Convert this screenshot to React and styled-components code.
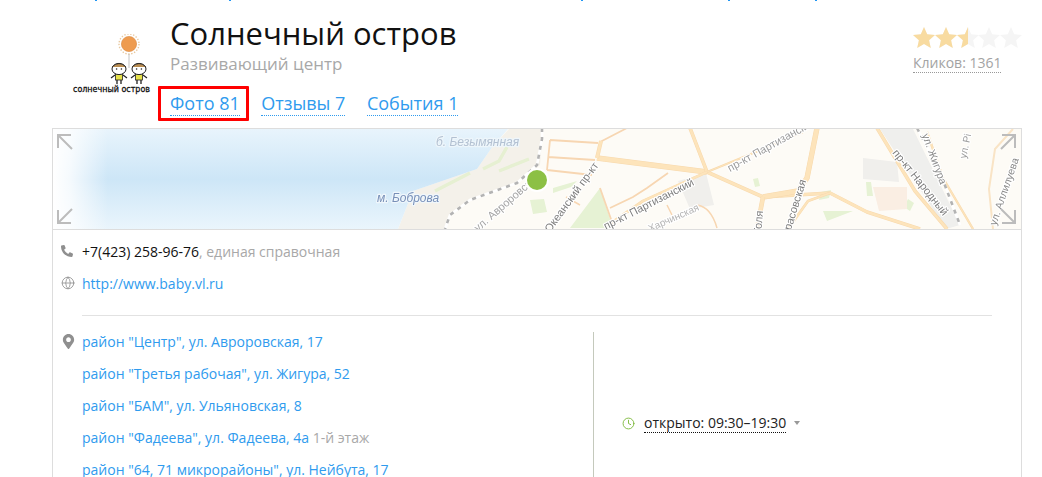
import React from "react";
import styled, { createGlobalStyle } from "styled-components";
import { Globe, Clock } from "lucide-react";
import { FaPhoneAlt, FaMapMarkerAlt } from "react-icons/fa";

const Global = createGlobalStyle`
  html, body { margin: 0; padding: 0; background: #fff; overflow: hidden; height: 477px; }
  body { font-family: "Open Sans", "Noto Sans", sans-serif; font-size: 14px; color: #111; }
`;
const Page = styled.div`width: 1042px; height: 477px; overflow: hidden; position: relative;`;
const Strip = styled.div`display: flex; height: 1px;`;
const Tick = styled.i`display: block; width: 2px; height: 1px; background: #2196f3; margin-left: ${p => p.$gap}px;`;
const Header = styled.header`display: flex; height: 127px; padding-left: 72px; box-sizing: border-box;`;
const Logo = styled.svg`width: 80px; height: 62px; margin-top: 33px; flex: none;`;
const Head = styled.div`margin-left: 18px; flex: 1; display: flex; flex-direction: column;`;
const Title = styled.h1`margin: 11px 0 0; font-size: 31px; line-height: 42px; font-weight: 400; color: #111;`;
const Subtitle = styled.div`font-size: 17px; line-height: 20px; color: #a8a8a8;`;
const Tabs = styled.nav`display: flex; gap: 21.5px; margin-top: 18px;`;
const Tab = styled.a`
  position: relative; font-size: 18px; line-height: 23px; color: #2f9bee;
  border-bottom: 1px dotted #2f9bee; display: block;
  ${p => p.$active && `
    &::after { content: ""; position: absolute; left: -12px; right: -9px; top: -6px; bottom: -6px; border: 3px solid #f00; border-radius: 1px; }
  `}
`;
const Rating = styled.div`width: 109px; margin: 26px 20px 0 0; flex: none;`;
const Clicks = styled.span`display: inline-block; margin-top: 4px; font-size: 14px; line-height: 19px; color: #a3a3a3; border-bottom: 1px dotted #999;`;
const Card = styled.section`margin-left: 52px; width: 968px; border: 1px solid #ddd; border-bottom: 0; height: 400px;`;
const MapBox = styled.div`height: 100px; border-bottom: 1px solid #ddd; overflow: hidden;`;
const MapSvg = styled.svg`display: block; width: 968px; height: 100px;`;
const Contacts = styled.div`padding: 5px 29px 0 8px;`;
const Row = styled.div`display: flex; align-items: center; height: 32px;`;
const IconSlot = styled.span`width: 21px; flex: none; display: flex; align-items: center; color: #8f8f8f;`;
const Line = styled.span`white-space: pre;`;
const Phone = styled.span`color: #111;`;
const Muted = styled.span`color: #a8a8a8;`;
const Link = styled.a`color: #2f9bee;`;
const Rule = styled.hr`margin: 16px 0 0 21px; border: 0; border-top: 1px solid #e2e2e2;`;
const Columns = styled.div`display: grid; grid-template-columns: 532px 1fr; margin-top: 9px;`;
const Addresses = styled.div``;
const Hours = styled.div`border-left: 1px solid #c4c9bc; height: 200px; margin-top: 7px; padding: 75px 0 0 28px; box-sizing: border-box;`;
const HoursRow = styled.div`display: flex; align-items: center; height: 32px; color: #7cb83a;`;
const HoursText = styled.span`margin-left: 9px; color: #222; border-bottom: 1px dotted #111; line-height: 18px;`;
const Caret = styled.i`margin-left: 8px; width: 0; height: 0; border: 3px solid transparent; border-top: 4px solid #999; border-bottom: 0;`;

const starPath = "M11 0l3.2 7.2 7.8.8-5.9 5.2 1.7 7.8L11 17l-6.8 4 1.7-7.8L0 8l7.8-.8z";
const Stars = () => (
  <svg width="109" height="22" viewBox="0 0 109 22" style={{ display: "block" }}>
    <defs>
      <clipPath id="half"><rect x="0" y="0" width="55" height="22" /></clipPath>
    </defs>
    {[0, 22, 44, 65, 87].map(x => <path key={x} d={starPath} transform={`translate(${x} 0)`} fill="#f5f5f5" />)}
    <g clipPath="url(#half)">
      {[0, 22, 44].map(x => <path key={x} d={starPath} transform={`translate(${x} 0)`} fill="#f8dba0" />)}
    </g>
  </svg>
);

const Kid = ({ x }) => (
  <g transform={`translate(${x} 0)`}>
    <path d="M-4 41l-4 3M4 41l4 3" stroke="#222" strokeWidth="1.2" fill="none" />
    <rect x="-3.5" y="40" width="7" height="6" fill="#e6e14a" stroke="#222" strokeWidth=".8" />
    <path d="M-2 46v4M2 46v4" stroke="#222" strokeWidth="1.3" />
    <ellipse cx="0" cy="35" rx="7" ry="5.6" fill="#fff" stroke="#222" strokeWidth="1" />
    <path d="M-7 33q7-7 14 0" fill="#b98d52" stroke="#222" strokeWidth=".8" />
    <circle cx="-2.4" cy="35" r=".8" fill="#222" /><circle cx="2.4" cy="35" r=".8" fill="#222" />
  </g>
);
const LogoArt = () => (
  <Logo viewBox="0 0 80 62">
    <circle cx="57" cy="10" r="10" fill="none" stroke="#e9c9a0" strokeWidth="1.4" strokeDasharray="1.4 1.6" />
    <circle cx="57" cy="10" r="7.6" fill="#ee9b4f" stroke="#d9873c" strokeWidth=".6" />
    <path d="M57 20v14" stroke="#aaa" strokeWidth=".7" />
    <Kid x={47} />
    <Kid x={67} />
    <text x="1" y="58" fontFamily="DejaVu Sans" fontWeight="400" stroke="#111" strokeWidth=".3" fontSize="8.8" textLength="77" lengthAdjust="spacingAndGlyphs" fill="#111">солнечный остров</text>
  </Logo>
);

const Label = ({ x, y, a = 0, s = 11, c = "#7d7d7d", italic, children, halo = "#fff" }) => (
  <text transform={`translate(${x} ${y}) rotate(${a})`} fontFamily="Liberation Sans" fontSize={s} fontStyle={italic ? "italic" : "normal"}
    fill={c} stroke={halo} strokeWidth="2.4" strokeLinejoin="round" style={{ paintOrder: "stroke" }}>{children}</text>
);
const Road = ({ d, w = 2.5 }) => (
  <g fill="none" strokeLinejoin="round">
    <path d={d} stroke="#f7d9ae" strokeWidth={w + 1} />
    <path d={d} stroke="#fde4bb" strokeWidth={w} />
  </g>
);
const Rail = ({ d }) => (
  <g fill="none">
    <path d={d} stroke="#fff" strokeWidth="2.6" />
    <path d={d} stroke="#b3b3b3" strokeWidth="2.6" strokeDasharray="4 5" />
  </g>
);
const Arrow = ({ d }) => <path d={d} fill="none" stroke="#bcbcbc" strokeWidth="2" />;

const MapArt = () => (
  <MapSvg viewBox="0 0 968 100">
    <defs>
      <linearGradient id="waterV" x1="0" y1="0" x2="0" y2="1">
        <stop offset="0" stopColor="#e8f4fc" />
        <stop offset=".5" stopColor="#cde6f7" />
        <stop offset="1" stopColor="#eaf5fc" />
      </linearGradient>
      <linearGradient id="fadeL" x1="0" y1="0" x2="1" y2="0">
        <stop offset="0" stopColor="#fff" />
        <stop offset=".3" stopColor="#fff" stopOpacity=".8" />
        <stop offset="1" stopColor="#fff" stopOpacity="0" />
      </linearGradient>
      <filter id="soft"><feGaussianBlur stdDeviation=".5" /></filter>
    </defs>
    <rect width="968" height="100" fill="#fdfbf6" />
    <path d="M345 100L360 62 424 40 440 17 456 0H490L487 36 464 54 417 71 397 86 392 100Z" fill="#f4f1ea" />
    <path d="M0 0H455L440 17 424 40 360 62 345 100H0Z" fill="url(#waterV)" />
    <rect width="55" height="100" fill="url(#fadeL)" />
    <g filter="url(#soft)">
      <path d="M430 40l16-8 8-14M382 62l35-18M446 42l30-12" stroke="#e6f0d2" strokeWidth="3.5" fill="none" />
      <path d="M477 71l14-1 3 13-14 2zM500 59l24-7-6 6-18 6zM547 59l13 40h-43zM700 50l5-1 2 8-5 1zM813 53h5l2 14h-6zM768 63l10-2-2 8-10 2zM855 70l6 4-4 8-6-4zM770 82h30l-26 10z" fill="#e6f2d4" />
      <path d="M810 29l34 4 2 20-36-3zM625 52l28-8 8 32-24 4z" fill="#f0efec" />
      <path d="M827 0h33l47 96-14 4z" fill="#efefed" />
      <path d="M820 58h34v22l-28 2z" fill="#faeee3" />
      <path d="M960 0l-18 20-6 40 4 40" stroke="#f9e4c6" strokeWidth="2" fill="none" />
      <path d="M497 11l48 3M495 28l47 3M494 41l45 5M497 11l-3 30M547 13l27-14" stroke="#f7d6b2" strokeWidth="1.8" fill="none" />
      <path d="M547 59l12 34M557 79l23-11 14-9 21-15" stroke="#f7d6b2" strokeWidth="1.8" fill="none" />
      <path d="M644 76q14 2 20 23M614 76l5 10M513 68l14 8" stroke="#f7d6b2" strokeWidth="1.5" fill="none" />
      <Road d="M544 29L654 43" w={4.4} />
      <Road d="M544 29L548 12" w={3} />
      <Road d="M637 -1L654 43 710 68 777 64 814 83 867 100" w={2.6} />
      <Road d="M654 43L590 72 554 97" w={2} />
      <Road d="M654 43L710 20 750 3" w={1} />
      <Road d="M764 -1L754 49 745 62 710 68" w={4.4} />
      <Road d="M710 68L704 100" w={3.6} />
      <Road d="M735 100L755 72 777 64" w={1.8} />
      <Road d="M824 -1L862 62 894 100" w={2.6} />
      <Road d="M874 3L890 49 920 100" w={1.4} />
      <Rail d="M489 -1L489 10 484 36 464 54 417 71 397 86 392 100" />
      <Rail d="M864 -1L885 38 907 96" />
    </g>
    <g filter="url(#soft)">
      <Label x={383} y={17} s={12} italic c="#b3c1d2" halo="#eef6fb">б. Безымянная</Label>
      <Label x={324} y={73} s={12} italic c="#7890b8" halo="#f0f7fc">м. Боброва</Label>
      <Label x={425} y={103} a={-41} s={11} c="#a5a5a5">ул. Авроровская</Label>
      <Label x={497} y={104} a={-54} s={11}>Океанский пр-кт</Label>
      <Label x={553} y={101} a={-27} s={11}>пр-кт Партизанский</Label>
      <Label x={597} y={103} a={-24} s={10} c="#b5b5b5">Харчинская</Label>
      <Label x={677} y={43} a={-29} s={11} c="#9b9b9b">пр-кт Партизанская</Label>
      <Label x={708} y={106} a={-85} s={11}>Толя</Label>
      <Label x={736} y={108} a={-73} s={11}>Красовская</Label>
      <Label x={839} y={24} a={51} s={11}>пр-кт Народный</Label>
      <Label x={869} y={6} a={70} s={10.5} c="#8a8a8a">ул. Жигура</Label>
      <Label x={913} y={30} a={-78} s={10} c="#9b9b9b">ул. Рі</Label>
      <Label x={943} y={97} a={-71} s={10.5} c="#8a8a8a">ул. Аллилуева</Label>
    </g>
    <circle cx="484" cy="51" r="12" fill="#fff" />
    <circle cx="484" cy="51" r="10" fill="#8cc045" />
    <Arrow d="M5 19V6H18M6 7L19 20" />
    <Arrow d="M5 81V94H18M6 93L19 80" />
    <Arrow d="M962 19V6H949M961 7L948 20" />
    <Arrow d="M962 81V94H949M961 93L948 80" />
  </MapSvg>
);

const addresses = [
  ['район "Центр", ул. Авроровская, 17'],
  ['район "Третья рабочая", ул. Жигура, 52'],
  ['район "БАМ", ул. Ульяновская, 8'],
  ['район "Фадеева", ул. Фадеева, 4а', " 1-й этаж"],
  ['район "64, 71 микрорайоны", ул. Нейбута, 17'],
];

export default function App() {
  return (
    <Page>
      <Global />
      <Strip>
        <Tick $gap={95} /><Tick $gap={132} /><Tick $gap={350} /><Tick $gap={145} /><Tick $gap={85} />
      </Strip>
      <Header>
        <LogoArt />
        <Head>
          <Title>Солнечный остров</Title>
          <Subtitle>Развивающий центр</Subtitle>
          <Tabs>
            <Tab $active>Фото 81</Tab>
            <Tab>Отзывы 7</Tab>
            <Tab>События 1</Tab>
          </Tabs>
        </Head>
        <Rating>
          <Stars />
          <Clicks>Кликов: 1361</Clicks>
        </Rating>
      </Header>
      <Card>
        <MapBox><MapArt /></MapBox>
        <Contacts>
          <Row>
            <IconSlot><FaPhoneAlt size={12} /></IconSlot>
            <Line><Phone>+7(423) 258-96-76</Phone><Muted>, единая справочная</Muted></Line>
          </Row>
          <Row>
            <IconSlot><Globe size={14} strokeWidth={1.4} /></IconSlot>
            <Link>http://www.baby.vl.ru</Link>
          </Row>
          <Rule />
          <Columns>
            <Addresses>
              {addresses.map(([a, n], i) => (
                <Row key={a}>
                  <IconSlot>{i === 0 && <FaMapMarkerAlt size={15} />}</IconSlot>
                  <Line><Link>{a}</Link>{n && <Muted>{n}</Muted>}</Line>
                </Row>
              ))}
            </Addresses>
            <Hours>
              <HoursRow>
                <Clock size={13} strokeWidth={1.7} />
                <HoursText>открыто: 09:30–19:30</HoursText>
                <Caret />
              </HoursRow>
            </Hours>
          </Columns>
        </Contacts>
      </Card>
    </Page>
  );
}
